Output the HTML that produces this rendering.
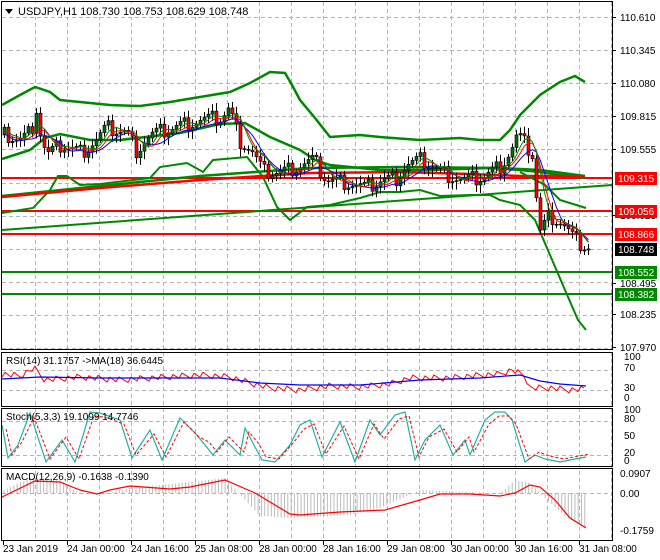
<!DOCTYPE html>
<html><head><meta charset="utf-8"><style>
html,body{margin:0;padding:0;background:#fff;width:660px;height:560px;overflow:hidden}
svg{display:block;font-family:"Liberation Sans",sans-serif;font-size:10px}
</style></head><body>
<svg id="s" width="660" height="560" xmlns="http://www.w3.org/2000/svg">
<rect width="660" height="560" fill="#fff"/>
<g id="grid" stroke="#b4b4b4" stroke-dasharray="4,3" stroke-width="1"></g>
<g id="ind" fill="none"></g>
<g id="cand"></g>
<g id="ind2" fill="none"></g>
<g stroke="#000" fill="none" stroke-width="1">
<rect x="1.5" y="1.5" width="611" height="348"/>
<rect x="1.5" y="352.5" width="611" height="54"/>
<rect x="1.5" y="408.5" width="611" height="58"/>
<rect x="1.5" y="468.5" width="611" height="72"/>
</g>
<g id="ax" fill="#000"></g>
<rect x="3" y="3" width="240" height="14" fill="#fff"/>
<polygon points="5,9 13,9 9,14" fill="#000"/>
<text x="18" y="15" font-size="11">USDJPY,H1  108.730 108.753 108.629 108.748</text>
<text x="6" y="364">RSI(14) 31.1757  -&gt;MA(18) 36.6445</text>
<text x="6" y="420">Stoch(5,3,3) 19.1099 14.7746</text>
<text x="6" y="480">MACD(12,26,9) -0.1638 -0.1390</text>
</svg>
<script>
(function(){
var NS="http://www.w3.org/2000/svg";
function el(p,t,a,txt){var e=document.createElementNS(NS,t);for(var k in a)e.setAttribute(k,a[k]);if(txt!=null)e.textContent=txt;document.getElementById(p).appendChild(e);return e;}
for(var x=35;x<612;x+=32)el("grid","line",{x1:x+.5,y1:2,x2:x+.5,y2:540});
for(var y=17;y<349;y+=33.1)el("grid","line",{x1:2,y1:Math.round(y)+.5,x2:612,y2:Math.round(y)+.5});
[370,390,421,455,493].forEach(function(y){el("grid","line",{x1:2,y1:y+.5,x2:612,y2:y+.5})});
function pl(pts,c,w,d,g){var s=pts.map(function(p){return p.join(",")}).join(" ");var a={points:s,stroke:c,"stroke-width":w};if(d)a["stroke-dasharray"]=d;el(g||"ind","polyline",a);}
function interp(k,x){if(x<=k[0][0])return k[0][1];for(var i=0;i<k.length-1;i++){if(x>=k[i][0]&&x<=k[i+1][0]){var t=(x-k[i][0])/(k[i+1][0]-k[i][0]);return k[i][1]+t*(k[i+1][1]-k[i][1]);}}return k[k.length-1][1];}
pl([[2,178],[612,178]],"#f00",2);pl([[2,211],[612,211]],"#f00",2);pl([[2,234],[612,234]],"#f00",2);
pl([[2,272],[612,272]],"#080",2);pl([[2,294],[612,294]],"#080",2);
pl([[2,105],[20,95],[35,87],[50,92],[60,100],[110,105],[140,106],[170,102],[200,97],[230,92],[250,83],[270,72],[285,73],[292,85],[300,100],[315,118],[330,137],[360,135],[380,137],[420,140],[460,138],[480,140],[500,140],[510,130],[520,115],[540,95],[560,82],[575,76],[585,82]],"#080",2.5);
pl([[2,159],[30,150],[45,138],[60,134],[90,140],[120,140],[180,133],[220,124],[245,123],[270,137],[300,150],[315,160],[330,165],[380,170],[430,170],[490,168],[520,170],[540,172],[560,175],[585,178]],"#080",2.5);
pl([[2,213],[33,208],[50,190],[58,176],[67,176],[80,185],[100,184],[150,178],[160,167],[187,163],[203,172],[213,160],[247,157],[263,177],[277,207],[290,220],[307,207],[330,205],[360,198],[380,192],[400,192],[420,190],[440,196],[470,195],[490,195],[500,200],[520,205],[535,220],[550,255],[565,290],[578,320],[586,330]],"#080",2);
pl([[2,230],[612,185]],"#080",2);
pl([[2,196],[100,186],[200,176],[310,168],[400,167],[500,168],[540,170],[570,174],[585,176]],"#080",2.5);
pl([[2,197],[100,188],[200,180],[310,173],[400,172],[470,174],[520,176],[560,176],[585,177]],"#f00",2.5);
pl([[520,172],[545,185],[560,200],[586,208]],"#080",2);
var key=[[3,135],[20,140],[30,130],[35,108],[40,140],[46,155],[60,145],[80,152],[95,140],[105,128],[125,132],[135,150],[150,135],[180,125],[200,120],[220,118],[228,108],[238,140],[250,150],[262,172],[280,172],[300,165],[312,160],[325,180],[345,182],[365,188],[380,180],[395,178],[405,165],[420,160],[440,172],[460,180],[480,178],[500,165],[510,150],[516,135],[528,150],[533,158],[537,235],[548,215],[560,222],[572,238],[580,245],[588,248]];
var prev=interp(key,3);var mids=[];
for(var x=3,i=0;x<590;x+=4,i++){var c=interp(key,x)+((i*37)%13-6)*1.3;var o=prev;var up=c<o;
var t0=Math.min(o,c),b0=Math.max(o,c);if(b0-t0<1)b0=t0+1;
var w1=t0-3-(i*13)%6,w2=b0+3+(i*7)%6;
el("cand","rect",{x:x+1,y:w1,width:1,height:w2-w1,fill:"#000"});
el("cand","rect",{x:x,y:t0,width:3,height:b0-t0,fill:up?"#007000":"#f00",stroke:"#000","stroke-width":0.6});
mids.push([x+1.5,(o+c)/2]);prev=c;}
function sm(a,n,off){var r=[];for(var i=0;i<a.length;i++){var s=0,k=0;for(var j=Math.max(0,i-n);j<=i;j++){s+=a[j][1];k++;}r.push([a[i][0],s/k+off]);}return r;}
pl(sm(mids,6,3),"#00f",1,null,"ind2");pl(sm(mids,4,1),"#f00",1,null,"ind2");pl(sm(mids,3,-1),"#080",1,null,"ind2");
var pr=[["110.610",17],["110.345",50],["110.080",83],["109.815",116],["109.555",149],["109.025",215],["108.495",283],["108.235",314],["107.970",347]];
pr.forEach(function(p){el("ax","line",{x1:612,y1:p[1]+.5,x2:616,y2:p[1]+.5,stroke:"#000"});el("ax","text",{x:620,y:p[1]+4},p[0]);});
[["109.315",178,"#f00"],["109.056",211,"#f00"],["108.866",234,"#f00"],["108.748",249,"#000"],["108.552",272,"#080"],["108.382",294,"#080"]].forEach(function(p){el("ax","rect",{x:615,y:p[1]-6,width:42,height:13,fill:p[2]});el("ax","text",{x:618,y:p[1]+4,fill:"#fff"},p[0]);});
[["100",360],["70",371],["30",391],["0",401],["100",413],["80",422],["50",439],["20",456],["0",464],["0.0907",477],["0.00",497],["-0.1759",534]].forEach(function(p){el("ax","text",{x:p[0].length>3?620:624,y:p[1]},p[0]);});
["23 Jan 2019","24 Jan 00:00","24 Jan 16:00","25 Jan 08:00","28 Jan 00:00","28 Jan 16:00","29 Jan 08:00","30 Jan 00:00","30 Jan 16:00","31 Jan 08:00"].forEach(function(t,i){var x=3+i*64;el("ax","line",{x1:x+.5,y1:541,x2:x+.5,y2:545,stroke:"#000"});el("ax","text",{x:x,y:552},t);});
var rk=[[2,374],[20,376],[34,368],[45,380],[80,377],[120,380],[150,378],[200,375],[230,377],[250,383],[270,388],[300,390],[330,386],[360,387],[390,384],[410,378],[450,378],[470,376],[500,374],[512,370],[525,376],[530,388],[550,388],[570,390],[586,389]];
var r=[];for(var x=2;x<=586;x+=3)r.push([x,interp(rk,x)+((x*17)%7-3)]);pl(r,"#f00",1);
pl([[2,379],[40,377],[100,378],[160,378],[220,378],[260,383],[300,385],[360,385],[420,380],[480,378],[520,375],[540,381],[560,384],[586,386]],"#00f",1.2);
var sv=[[2,425],[8,458],[18,445],[30,413],[46,462],[62,440],[75,462],[90,412],[100,413],[120,420],[132,458],[150,430],[162,460],[180,418],[195,433],[205,445],[213,455],[225,440],[240,455],[245,428],[255,447],[262,460],[275,462],[290,445],[300,425],[310,420],[322,457],[340,422],[355,462],[370,420],[380,435],[395,415],[405,412],[415,460],[425,440],[440,425],[453,455],[465,440],[470,455],[485,420],[495,412],[505,412],[512,420],[525,462],[535,455],[545,459],[560,462],[575,459],[586,457]];
pl(sv,"#20b0a0",1.2);pl(sv.map(function(p){return [p[0]+4,p[1]+(p[1]<438?4:-3)]}),"#f00",1,"3,2");
var mk=[[2,493],[30,480],[60,482],[80,496],[100,497],[130,490],[160,487],[200,483],[225,480],[260,518],[290,520],[350,517],[380,510],[420,492],[470,494],[500,496],[515,482],[530,485],[545,500],[565,518],[586,530]];
for(var x=4;x<586;x+=3.3){var v=interp(mk,x)-2;el("ind","line",{x1:x,y1:493,x2:x,y2:v,stroke:"#bbb","stroke-width":1});}
var ml=[[2,497],[35,481],[60,482],[80,490],[97,494],[110,490],[130,486],[170,489],[190,487],[225,480],[255,493],[290,514],[300,515],[340,512],[385,510],[420,500],[440,494],[470,494],[500,496],[515,493],[530,485],[540,487],[555,500],[570,518],[586,528]];
pl(ml,"#f00",1.2,null,"ind2");
})();
</script>
</body></html>
